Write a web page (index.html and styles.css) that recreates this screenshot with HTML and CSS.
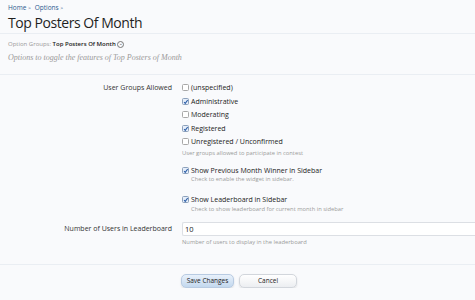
FILE: index.html
```html
<!DOCTYPE html>
<html lang="en">
<head>
  <meta charset="UTF-8" />
  <title>Top Posters Of Month</title>
  <link rel="stylesheet" href="styles.css">
</head>
<body>
  <div class="titlebar">
    <div class="crumbs"><a href="#">Home</a> <span class="gt">&gt;</span> <a href="#">Options</a> <span class="gt">&gt;</span></div>
    <h1>Top Posters Of Month</h1>
  </div>

  <div class="groupinfo">
    <div class="groups">Option Groups: <b>Top Posters Of Month</b> <span class="drop">&#8964;</span></div>
    <p class="desc">Options to toggle the features of Top Posters of Month</p>
  </div>

  <form class="opts">
    <div class="row">
      <div class="lbl">User Groups Allowed</div>
      <div class="ctrl">
        <ul class="checks">
          <li><span class="box"></span>(unspecified)</li>
          <li><span class="box on"><svg viewBox="0 0 8 8"><path d="M1.6 4.2 L3.3 6.1 L6.8 1.2" /></svg></span>Administrative</li>
          <li><span class="box"></span>Moderating</li>
          <li><span class="box on"><svg viewBox="0 0 8 8"><path d="M1.6 4.2 L3.3 6.1 L6.8 1.2" /></svg></span>Registered</li>
          <li><span class="box"></span>Unregistered / Unconfirmed</li>
        </ul>
        <p class="hint">User groups allowed to participate in contest</p>
      </div>
    </div>

    <div class="row">
      <div class="lbl"></div>
      <div class="ctrl single">
        <div class="check"><span class="box on"><svg viewBox="0 0 8 8"><path d="M1.6 4.2 L3.3 6.1 L6.8 1.2" /></svg></span>Show Previous Month Winner in Sidebar</div>
        <p class="hint sub">Check to enable the widget in sidebar.</p>
      </div>
    </div>

    <div class="row">
      <div class="lbl"></div>
      <div class="ctrl single">
        <div class="check"><span class="box on"><svg viewBox="0 0 8 8"><path d="M1.6 4.2 L3.3 6.1 L6.8 1.2" /></svg></span>Show Leaderboard in Sidebar</div>
        <p class="hint sub">Check to show leaderboard for current month in sidebar</p>
      </div>
    </div>

    <div class="row num">
      <div class="lbl">Number of Users in Leaderboard</div>
      <div class="ctrl">
        <input type="text" class="field" value="10" />
        <p class="hint">Number of users to display in the leaderboard</p>
      </div>
    </div>

    <div class="buttons">
      <button type="button" class="btn primary">Save Changes</button>
      <button type="button" class="btn">Cancel</button>
    </div>
  </form>
</body>
</html>
```

FILE: styles.css
```css
* {
  box-sizing: border-box;
}

body {
  margin: 0;
  background-color: #f9fafc;
  font-family: "Open Sans", "DejaVu Sans", sans-serif;
  color: #222;
  overflow: hidden;
}

/* Cabeçalho */
.titlebar {
  padding: 3px 8px 0;
  border-bottom: 1px solid #eaeef3;
  height: 34px;
}

.crumbs {
  font-size: 6.5px;
  line-height: 9px;
  color: #2b5a8f;
}

.crumbs a {
  color: #2b5a8f;
  text-decoration: none;
}

.crumbs .gt {
  font-size: 5px;
  margin: 0 2px 0 0;
}

h1 {
  margin: 0;
  font-family: "Open Sans", sans-serif;
  font-weight: 400;
  font-size: 14px;
  line-height: 20px;
  color: #1f1f1f;
  letter-spacing: -0.45px;
}

.groupinfo {
  padding: 5px 8px 0;
  height: 41px;
  border-bottom: 1px solid #eaeef3;
}

.groups {
  font-size: 6px;
  line-height: 10px;
  color: #999;
}

.groups b {
  color: #222;
  font-weight: 600;
}

.drop {
  display: inline-block;
  width: 7px;
  height: 7px;
  border: 1px solid #777;
  border-radius: 50%;
  font-size: 5px;
  line-height: 2px;
  text-align: center;
  color: #444;
  vertical-align: middle;
}

.desc {
  margin: 4px 0 0;
  font-family: "Liberation Serif", serif;
  font-style: italic;
  font-size: 8px;
  color: #999;
}

/* Formulário */
.opts {
  padding-top: 6px;
}

.row {
  display: grid;
  grid-template-columns: 172px 1fr;
  column-gap: 10px;
  font-size: 7px;
}

.lbl {
  text-align: right;
  line-height: 13.5px;
  color: #333;
}

.checks {
  list-style: none;
  margin: 0;
  padding: 0;
}

.checks li, .check {
  display: flex;
  align-items: center;
  height: 13.5px;
  color: #222;
}

.box {
  width: 7px;
  height: 7px;
  margin-right: 2px;
  border: 1px solid #a8a8a8;
  border-radius: 1.5px;
  background-color: #fff;
  display: inline-flex;
  flex: none;
}

.box.on {
  border-color: #8da1bb;
  background-color: #e6eefa;
}

.box svg {
  width: 8px;
  height: 8px;
  margin: -1px 0 0 -0.5px;
}

.box path {
  fill: none;
  stroke: #2d5fa8;
  stroke-width: 1.6;
}

.hint {
  margin: 0;
  font-size: 5.8px;
  line-height: 8px;
  color: #9a9a9a;
}

.checks + .hint {
  padding-top: 0;
  height: 14px;
}

.single {
  padding-top: 1px;
}

.hint.sub {
  padding-left: 9px;
  margin-top: -2px;
  height: 17px;
}

.row.num .lbl {
  line-height: 14px;
}

.field {
  display: block;
  width: 100%;
  height: 14px;
  padding: 0 2px;
  border: 1px solid #dcdfe4;
  border-right: none;
  border-radius: 2px 0 0 2px;
  background-color: #fff;
  font-family: inherit;
  font-size: 7.5px;
  color: #222;
  margin: 0;
}

.row.num .hint {
  padding-top: 2px;
}

.buttons {
  margin-top: 18px;
  border-top: 1px solid #eaeef3;
  padding: 9px 0 0 181px;
  display: flex;
  gap: 5px;
}

.btn {
  height: 14px;
  width: 53px;
  padding: 0;
  border: 1px solid #d2d6dc;
  border-radius: 5px;
  background: linear-gradient(#ffffff, #eceef1);
  box-shadow: 0 1px 2px rgba(0, 0, 0, 0.12);
  font-family: inherit;
  font-size: 6.5px;
  color: #222;
}

.btn.primary {
  background: linear-gradient(#e8f1fb, #c3d8ee);
  border-color: #b8cbe2;
}

.btn + .btn {
  width: 58px;
}
```
